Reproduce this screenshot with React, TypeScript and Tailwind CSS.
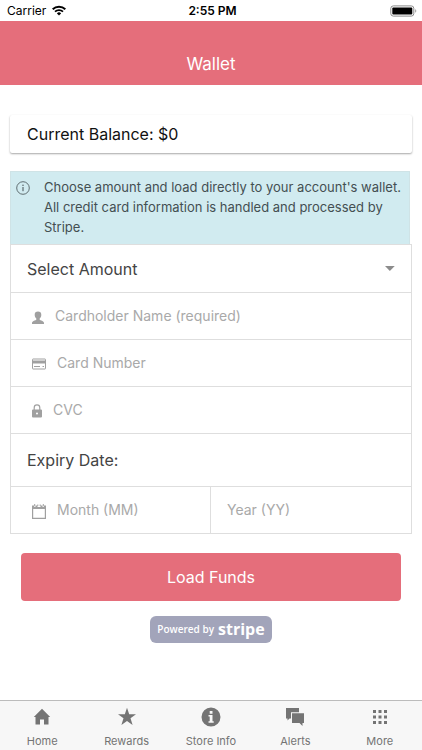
import { useState } from "react";
import type { ReactNode } from "react";

function PersonIcon() {
  return (
    <svg width="12" height="13" viewBox="0 0 12 13" fill="currentColor" aria-hidden="true">
      <path d="M6 0.500c2.200 0 3.300 1.200 3.300 3.200 0 1.600-.6 3-1.600 3.800v1.200c.5.800 4.300 1 4.300 3.300V13H0v-1c0-2.300 3.800-2.500 4.300-3.300V7.500c-1-.8-1.600-2.200-1.600-3.800C2.700 1.700 3.800 .5 6 .5z" />
    </svg>
  );
}

function CardIcon() {
  return (
    <svg width="14" height="12" viewBox="0 0 14 12" fill="none" aria-hidden="true">
      <rect x="0.500" y="1" width="13" height="10" rx="0.500" stroke="currentColor" />
      <path d="M0.500 2.500h13v3h-13z" fill="currentColor" />
      <path d="M2 8.500h6M10.500 8.500h1.500" stroke="currentColor" />
    </svg>
  );
}

function LockIcon() {
  return (
    <svg width="10" height="14" viewBox="0 0 10 14" aria-hidden="true">
      <path d="M2.200 6V3.700a2.800 2.800 0 0 1 5.600 0V6" fill="none" stroke="currentColor" strokeWidth="1.200" />
      <path
        fillRule="evenodd"
        d="M1 5.500h8a1 1 0 0 1 1 1V12.500a1 1 0 0 1-1 1H1a1 1 0 0 1-1-1V6.500a1 1 0 0 1 1-1zM5 8.500a1 1 0 1 0 0 2 1 1 0 0 0 0-2z"
        fill="currentColor"
      />
    </svg>
  );
}

function CalendarIcon() {
  return (
    <svg width="14" height="15" viewBox="0 0 14 15" aria-hidden="true">
      <path d="M0.600 3v11.400h12.800V3" fill="none" stroke="currentColor" strokeWidth="1.200" />
      <path d="M0 1.500h2v1.500h1.500V1.500h2v1.500h3V1.500h2v1.500H12V1.500h2V5H0z" fill="currentColor" />
      <path d="M2.700 0v2.300M11.300 0v2.300M5.800 0.500v1.500M8.200 0.500v1.500" stroke="currentColor" />
    </svg>
  );
}

function InfoOutlineIcon() {
  return (
    <svg width="14" height="14" viewBox="0 0 14 14" fill="none" className="shrink-0" aria-hidden="true">
      <circle cx="7" cy="7" r="6.300" stroke="currentColor" strokeWidth="0.800" />
      <path d="M7 6v4.200" stroke="currentColor" />
      <circle cx="7" cy="4.200" r="0.700" fill="currentColor" />
    </svg>
  );
}

function StatusBar() {
  return (
    <div className="grid h-[21px] grid-cols-3 items-center pr-1 pl-[7px] text-xs text-black">
      <div className="flex items-center gap-1.5">
        <span>Carrier</span>
        <svg width="14" height="11" viewBox="0 0 14 11" fill="none" stroke="currentColor" aria-hidden="true">
          <path d="M0.700 4.200a9 9 0 0 1 12.600 0" strokeWidth="2" />
          <path d="M3 6.700a5.700 5.700 0 0 1 8 0" strokeWidth="1.800" />
          <path d="M7 10.500L4.900 8.400a3 3 0 0 1 4.200 0z" fill="currentColor" stroke="none" />
        </svg>
      </div>
      <span className="text-center font-semibold">2:55 PM</span>
      <svg width="28" height="12" viewBox="0 0 28 12" className="justify-self-end" aria-hidden="true">
        <rect x="0.800" y="0.900" width="23" height="10.200" rx="2.500" fill="none" stroke="#8a8a8a" />
        <rect x="2.300" y="2.400" width="20" height="7.200" rx="1" fill="#000" />
        <path d="M25.300 4.300c1.300.3 1.300 3.100 0 3.400z" fill="#8a8a8a" />
      </svg>
    </div>
  );
}

function Field({
  label,
  icon,
  value,
  onChange,
}: {
  label: string;
  icon?: ReactNode;
  value: string;
  onChange: (value: string) => void;
}) {
  return (
    <label className="flex h-[46px] min-w-0 items-center gap-[11px] text-[#a0a0a0]">
      {icon && <span className="pt-0.5">{icon}</span>}
      <input
        type="text"
        aria-label={label}
        placeholder={label}
        value={value}
        onChange={(e) => onChange(e.target.value)}
        className="w-full min-w-0 bg-transparent text-sm text-[#444] outline-none placeholder:text-[#a9a9a9]"
      />
    </label>
  );
}

const tabs = [
  {
    name: "Home",
    icon: <path d="M10 1.800l8.200 8.200H16.500V17.500h-4.500v-5H8v5H3.500V10H1.800z" />,
  },
  {
    name: "Rewards",
    icon: <path d="M10 0.800l2.200 6.500h6.800l-5.500 4 2.100 6.700-5.600-4.100L4.400 18l2.100-6.700-5.500-4h6.800z" />,
  },
  {
    name: "Store Info",
    icon: (
      <path
        fillRule="evenodd"
        d="M10 0.500a9.500 9.500 0 1 1 0 19 9.500 9.500 0 0 1 0-19zM8.700 4v2.700h2.800V4zM7.500 8v1.500h1.200v4.700H7.500v1.500h5.200v-1.500h-1.200V8z"
      />
    ),
  },
  {
    name: "Alerts",
    icon: <path d="M1 1h13v4.300H6v6.200H4.500L2.500 13.500V11.500H1zM7 6.300h12v9.700h-1.500v3l-3-3H7z" />,
  },
  {
    name: "More",
    icon: (
      <path d="M3 3h3v3H3zM8.500 3h3v3h-3zM14 3h3v3h-3zM3 8.500h3v3H3zM8.500 8.500h3v3h-3zM14 8.500h3v3h-3zM3 14h3v3H3zM8.500 14h3v3h-3zM14 14h3v3h-3z" />
    ),
  },
];

function TabBar() {
  return (
    <nav className="grid grid-cols-5 border-t border-[#bcbcbc] bg-[#f7f7f7] pt-1.5 pb-px">
      {tabs.map((tab) => (
        <a key={tab.name} href="#" className="flex flex-col items-center gap-1.5 text-[#747474]">
          <svg width="20" height="20" viewBox="0 0 20 20" fill="currentColor" aria-hidden="true">
            {tab.icon}
          </svg>
          <span className="text-[11px] leading-4">{tab.name}</span>
        </a>
      ))}
    </nav>
  );
}

export default function App() {
  const [amount, setAmount] = useState("");
  const [name, setName] = useState("");
  const [card, setCard] = useState("");
  const [cvc, setCvc] = useState("");
  const [month, setMonth] = useState("");
  const [year, setYear] = useState("");

  return (
    <div className="flex min-h-screen flex-col bg-white font-[Inter,sans-serif]">
      <StatusBar />
      <header className="flex h-16 items-end justify-center bg-[#e56e7b] pb-[7px]">
        <h1 className="text-[17px] leading-7 text-white">Wallet</h1>
      </header>

      <main className="flex-1 px-2.5 pt-[30px]">
        <div className="rounded-xs px-[17px] py-2 text-base leading-[22px] text-[#111] shadow-[0_1px_2px_rgba(0,0,0,0.35)]">
          Current Balance: $0
        </div>

        <div className="mt-[18px] mr-0.5 flex gap-[14px] border border-b-0 border-[#cfe3e6] bg-[#d1ebf0] px-[5px] pt-[5px] pb-[7px] text-[#444f52]">
          <span className="pt-1">
            <InfoOutlineIcon />
          </span>
          <p className="text-[13px] leading-5">
            Choose amount and load directly to your account's wallet. All credit card information is handled and
            processed by Stripe.
          </p>
        </div>

        <form onSubmit={(e) => e.preventDefault()}>
          <div className="divide-y divide-[#dedede] border border-[#dedede]">
            <label className="flex h-12 items-center px-4">
              <select
                aria-label="Select Amount"
                value={amount}
                onChange={(e) => setAmount(e.target.value)}
                className="w-full appearance-none bg-transparent text-base text-[#444] outline-none"
              >
                <option value="">Select Amount</option>
                <option value="10">$10</option>
                <option value="25">$25</option>
                <option value="50">$50</option>
              </select>
              <svg width="10" height="5" viewBox="0 0 10 5" fill="#8c8c8c" aria-hidden="true">
                <path d="M0 0h10L5 5z" />
              </svg>
            </label>
            <div className="px-[21px]">
              <Field label="Cardholder Name (required)" icon={<PersonIcon />} value={name} onChange={setName} />
            </div>
            <div className="px-[21px]">
              <Field label="Card Number" icon={<CardIcon />} value={card} onChange={setCard} />
            </div>
            <div className="px-[21px]">
              <Field label="CVC" icon={<LockIcon />} value={cvc} onChange={setCvc} />
            </div>
            <div className="px-4 py-[14px] text-base text-[#444]">Expiry Date:</div>
            <div className="grid grid-cols-2 divide-x divide-[#dedede]">
              <div className="pl-[21px]">
                <Field label="Month (MM)" icon={<CalendarIcon />} value={month} onChange={setMonth} />
              </div>
              <div className="pl-4">
                <Field label="Year (YY)" value={year} onChange={setYear} />
              </div>
            </div>
          </div>

          <div className="px-[11px] pt-[19px]">
            <button type="submit" className="h-12 w-full rounded bg-[#e56e7b] text-base text-white">
              Load Funds
            </button>
          </div>
        </form>

        <div className="flex justify-center pt-[15px]">
          <a
            href="#"
            className="flex h-[27px] items-center gap-1 rounded-md bg-[#a2a4ba] px-[7px] font-['Open_Sans',sans-serif] text-white"
          >
            <span className="text-[10px] font-semibold">Powered by</span>
            <span className="pb-0.5 text-base leading-6 font-bold">stripe</span>
          </a>
        </div>
      </main>

      <TabBar />
    </div>
  );
}
